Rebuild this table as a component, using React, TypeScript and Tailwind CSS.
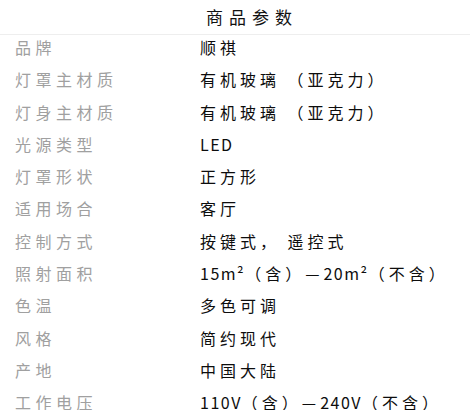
const rows: [string, string][] = [
  ['品牌', '顺祺'],
  ['灯罩主材质', '有机玻璃 （亚克力）'],
  ['灯身主材质', '有机玻璃 （亚克力）'],
  ['光源类型', 'LED'],
  ['灯罩形状', '正方形'],
  ['适用场合', '客厅'],
  ['控制方式', '按键式， 遥控式'],
  ['照射面积', '15m²（含）—20m²（不含）'],
  ['色温', '多色可调'],
  ['风格', '简约现代'],
  ['产地', '中国大陆'],
  ['工作电压', '110V（含）—240V（不含）'],
];

// latin runs get tighter tracking than the CJK text around them
function Value({ text }: { text: string }) {
  const parts = text.split(/([A-Za-z0-9²]+)/).filter(Boolean);
  return (
    <>
      {parts.map((p, i) =>
        /^[A-Za-z0-9²]+$/.test(p) ? (
          <span key={i} className="tracking-[1.5px]">{p}</span>
        ) : (
          <span key={i}>{p}</span>
        )
      )}
    </>
  );
}

export default function App() {
  return (
    <div className="w-[470px] h-[410px] overflow-hidden bg-white font-['Noto_Sans_CJK_SC','Noto_Sans',sans-serif]">
      <div className="h-[35px] border-b border-[#eeeeee] flex items-center justify-center pl-[34px]">
        <span className="text-[17px] leading-[20px] tracking-[6px] text-[#111111]">商品参数</span>
      </div>
      <div className="-mt-[4px]">
        {rows.map(([label, value]) => (
          <div key={label} className="h-[32.3px] flex items-start pt-[8px]">
            <div className="w-[200px] pl-[15px] text-[16px] leading-[16px] tracking-[4.5px] text-[#a0a0a0]">
              {label}
            </div>
            <div className="text-[16px] leading-[16px] tracking-[4px] text-[#0d0d0d] whitespace-nowrap">
              <Value text={value} />
            </div>
          </div>
        ))}
      </div>
    </div>
  );
}
